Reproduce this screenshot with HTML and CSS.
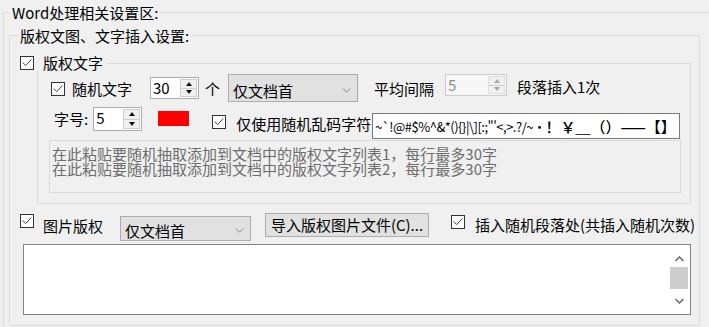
FILE: index.html
```html
<!DOCTYPE html>
<html lang="zh-CN">
<head>
<meta charset="utf-8">
<title>Word处理相关设置区</title>
<link rel="stylesheet" href="styles.css">
</head>
<body>
<div class="outer">
  <div class="title">Word处理相关设置区:</div>
  <div class="g2">
    <div class="title t2">版权文图、文字插入设置:</div>
    <div class="g3">
      <div class="title t3"><span class="cb"><svg viewBox="0 0 14 14"><polyline points="2,6.5 5.5,10 12,3"/></svg></span><span class="cb-label">版权文字</span></div>
      <div class="row r1">
        <span class="cb r1-cb"><svg viewBox="0 0 14 14"><polyline points="2,6.5 5.5,10 12,3"/></svg></span>
        <span class="lbl r1-lbl">随机文字</span>
        <div class="spin r1-spin"><span class="spin-val">30</span><div class="spin-btns"><span class="sb"><i class="up"></i></span><span class="sb"><i class="dn"></i></span></div></div>
        <span class="lbl r1-ge">个</span>
        <div class="combo r1-combo"><span class="combo-text">仅文档首</span><svg class="chev" viewBox="0 0 10 6"><polyline points="0.5,0.5 5,5 9.5,0.5"/></svg></div>
        <span class="lbl r1-avg">平均间隔</span>
        <div class="spin disabled r1-dspin"><span class="spin-val">5</span><div class="spin-btns"><span class="sb"><i class="up"></i></span><span class="sb"><i class="dn"></i></span></div></div>
        <span class="lbl r1-para">段落插入1次</span>
      </div>
      <div class="row r2">
        <span class="lbl r2-size">字号:</span>
        <div class="spin r2-spin"><span class="spin-val">5</span><div class="spin-btns"><span class="sb"><i class="up"></i></span><span class="sb"><i class="dn"></i></span></div></div>
        <span class="swatch"></span>
        <span class="cb r2-cb"><svg viewBox="0 0 14 14"><polyline points="2,6.5 5.5,10 12,3"/></svg></span>
        <span class="lbl r2-lbl">仅使用随机乱码字符</span>
        <div class="textbox r2-text"><span class="ascii">~`!@#$%^&amp;*(){}|\][:;"'&lt;,&gt;.?/~·</span><span class="wide">！￥＿（）——【】</span></div>
      </div>
      <div class="dis-area"><div class="dline">在此粘贴要随机抽取添加到文档中的版权文字列表1，每行最多30字</div><div class="dline">在此粘贴要随机抽取添加到文档中的版权文字列表2，每行最多30字</div></div>
    </div>
    <div class="row r3">
      <span class="cb r3-cb"><svg viewBox="0 0 14 14"><polyline points="2,6.5 5.5,10 12,3"/></svg></span>
      <span class="lbl r3-lbl">图片版权</span>
      <div class="combo r3-combo"><span class="combo-text">仅文档首</span><svg class="chev" viewBox="0 0 10 6"><polyline points="0.5,0.5 5,5 9.5,0.5"/></svg></div>
      <div class="btn r3-btn">导入版权图片文件(C)...</div>
      <span class="cb r3-cb2"><svg viewBox="0 0 14 14"><polyline points="2,6.5 5.5,10 12,3"/></svg></span>
      <span class="lbl r3-lbl2">插入随机段落处(共插入随机次数)</span>
    </div>
    <div class="memo">
      <div class="memo-body"></div>
      <div class="vscroll">
        <span class="arrow"><svg viewBox="0 0 9 6"><polyline points="0.5,5 4.5,1 8.5,5"/></svg></span>
        <span class="thumb"></span>
        <span class="track"></span>
        <span class="arrow"><svg viewBox="0 0 9 6"><polyline points="0.5,1 4.5,5 8.5,1"/></svg></span>
      </div>
    </div>
  </div>
</div>
</body>
</html>
```
FILE: styles.css
```css
html, body {
  margin: 0;
  padding: 0;
}
body {
  background: #f0f0f0;
  font-family: "Noto Sans CJK SC", "Microsoft YaHei", sans-serif;
  font-size: 15px;
  line-height: 17px;
  color: #000;
  width: 709px;
  height: 327px;
  overflow: hidden;
}
.outer {
  margin: 12px 0 0 3px;
  border-style: solid;
  border-color: #dcdcdc;
  border-width: 1px 0 0 1px;
  width: 706px;
  height: 315px;
  box-sizing: border-box;
}
.title {
  position: relative;
  width: fit-content;
  height: 17px;
  line-height: 17px;
  padding: 0 2px;
  background: #f0f0f0;
  white-space: nowrap;
  margin: -9px 0 0 6px;
}
.g2 {
  margin: 14px 0 0 5px;
  width: 691px;
  height: 291px;
  border: 1px solid #dcdcdc;
  box-sizing: border-box;
}
.t2 {
  margin: -9px 0 0 8px;
}
.g3 {
  margin: 19px 0 0 27px;
  width: 654px;
  height: 141px;
  border: 1px solid #dcdcdc;
  box-sizing: border-box;
}
.t3 {
  display: flex;
  align-items: center;
  margin: -10px 0 0 -18px;
  padding: 0 3px 0 0;
}
.t3 .cb-label {
  margin-left: 9px;
}
.cb {
  display: inline-flex;
  width: 14px;
  height: 14px;
  box-sizing: border-box;
  border: 1px solid #333;
  background: #fff;
  flex: none;
}
.cb svg {
  width: 12px;
  height: 12px;
  fill: none;
  stroke: #333;
  stroke-width: 1.1;
}
.row {
  display: flex;
  align-items: flex-start;
  white-space: nowrap;
}
.lbl {
  flex: none;
  line-height: 17px;
}
/* row 1 */
.r1 {
  margin-top: 2px;
  height: 30px;
  align-items: center;
}
.r1-cb { margin-left: 13px; margin-top: 1px; }
.r1-lbl { margin-left: 7px; }
.r1-spin { margin-left: 18px; width: 49px; height: 22px; }
.r1-ge { margin-left: 6px; }
.r1-combo { margin-left: 8px; width: 130px; height: 28px; }
.r1-avg { margin-left: 16px; }
.r1-dspin { margin-left: 11px; width: 62px; height: 22px; margin-bottom: 6px; }
.r1-para { margin-left: 10px; margin-bottom: 4px; }

.spin {
  flex: none;
  display: flex;
  box-sizing: border-box;
  border: 1px solid #abadb3;
  background: #fff;
}
.spin-val {
  flex: 1;
  padding-left: 2px;
  line-height: 19px;
}
.spin-btns {
  width: 15px;
  margin: 1px;
  display: flex;
  flex-direction: column;
  border: 1px solid #cfcfcf;
  background: #f0f0f0;
}
.sb {
  flex: 1;
  display: flex;
  align-items: center;
  justify-content: center;
}
.sb + .sb {
  border-top: 1px solid #cfcfcf;
}
.up {
  width: 0;
  height: 0;
  border-left: 3px solid transparent;
  border-right: 3px solid transparent;
  border-bottom: 4px solid #111;
}
.dn {
  width: 0;
  height: 0;
  border-left: 3px solid transparent;
  border-right: 3px solid transparent;
  border-top: 4px solid #111;
}
.spin.disabled {
  border-color: #cccccc;
  background: #f7f7f7;
}
.spin.disabled .spin-val {
  color: #8a8a8a;
}
.spin.disabled .spin-btns {
  border-color: #e0e0e0;
}
.spin.disabled .up { border-bottom-color: #a8a8a8; }
.spin.disabled .dn { border-top-color: #a8a8a8; }

.combo {
  flex: none;
  display: flex;
  align-items: center;
  box-sizing: border-box;
  border: 1px solid #adadad;
  background: #e1e1e1;
  padding: 4px 6px 0 4px;
}
.combo-text {
  flex: 1;
}
.chev {
  width: 9px;
  height: 5px;
  fill: none;
  stroke: #7a7a7a;
  stroke-width: 1;
}
/* row 2 */
.r2 {
  margin-top: 4px;
}
.r2-size { margin-left: 16px; margin-top: 3px; }
.r2-spin { margin-left: 5px; width: 49px; height: 24px; }
.swatch {
  flex: none;
  width: 31px;
  height: 15px;
  margin: 4px 0 0 16px;
  background: #ff0000;
}
.r2-cb { margin: 8px 0 0 23px; }
.r2-lbl { margin: 8px 0 0 10px; }
.r2-text {
  margin: 6px 0 0 1px;
}
.textbox {
  flex: none;
  display: flex;
  align-items: center;
  box-sizing: border-box;
  width: 308px;
  height: 26px;
  border: 1px solid #7a7a7a;
  background: #fff;
  padding-left: 2px;
  overflow: hidden;
}
.ascii {
  font-size: 13px;
  letter-spacing: -0.5px;
  line-height: 17px;
}
.wide {
  font-size: 15px;
  line-height: 17px;
  font-weight: 500;
}
.dis-area {
  margin: 1px 0 0 11px;
  width: 632px;
  height: 53px;
  box-sizing: border-box;
  border: 1px solid #dadada;
  background: #f0f0f0;
  color: #6d6d6d;
  padding: 5px 0 0 2px;
  white-space: nowrap;
}
.dline {
  height: 15px;
  line-height: 15px;
}
/* row 3 */
.r3 {
  margin-top: 9px;
  height: 28px;
}
.r3-cb { margin: 1px 0 0 10px; }
.r3-lbl { margin: 4px 0 0 9px; }
.r3-combo { margin: 3px 0 0 17px; width: 131px; height: 25px; }
.btn {
  flex: none;
  box-sizing: border-box;
  border: 1px solid #adadad;
  background: #e1e1e1;
  text-align: center;
  line-height: 22px;
}
.r3-btn { margin: 0 0 0 14px; width: 164px; height: 24px; }
.r3-cb2 { margin: 2px 0 0 22px; }
.r3-lbl2 { margin: 3px 0 0 10px; }

.memo {
  margin: 3px 0 0 13px;
  width: 668px;
  height: 71px;
  box-sizing: border-box;
  border: 1px solid #828282;
  background: #fff;
  display: flex;
}
.memo-body {
  flex: 1;
}
.vscroll {
  width: 18px;
  margin-right: 2px;
  padding: 5px 0;
  display: flex;
  flex-direction: column;
  background: #fff;
}
.arrow {
  height: 17px;
  flex: none;
  display: flex;
  align-items: center;
  justify-content: center;
}
.arrow svg {
  width: 9px;
  height: 6px;
  fill: none;
  stroke: #606060;
  stroke-width: 1.4;
}
.thumb {
  flex: none;
  height: 22px;
  background: #cdcdcd;
}
.track {
  flex: 1;
}
```
